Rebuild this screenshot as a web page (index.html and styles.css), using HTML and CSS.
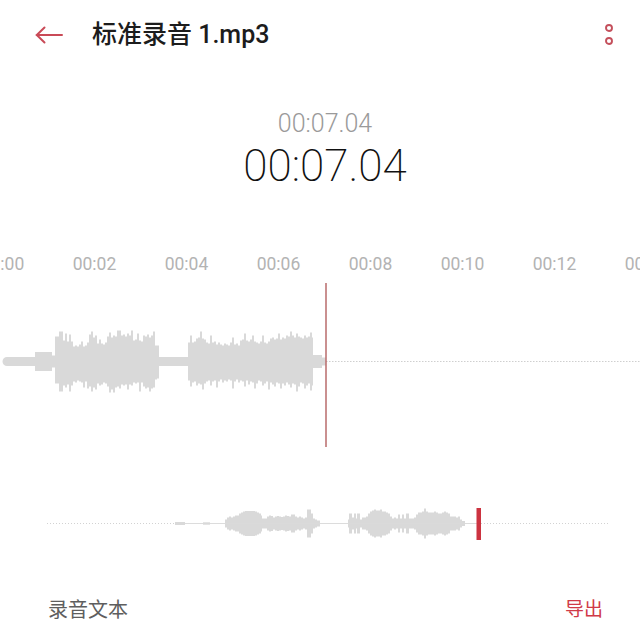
FILE: index.html
```html
<!DOCTYPE html>
<html lang="zh">
<head>
<meta charset="utf-8">
<title>标准录音 1.mp3</title>
<link rel="stylesheet" href="styles.css">
</head>
<body>
<div class="page">
  <div class="header">
    <svg class="back" viewBox="0 0 28 18"><path d="M1.5 9H27M9.5 1.5L1.8 9l7.7 7.5" fill="none" stroke="#c94a57" stroke-width="2" stroke-linecap="round" stroke-linejoin="round"/></svg>
    <div class="title">标准录音 1.mp3</div>
    <svg class="more" viewBox="0 0 12 30"><circle cx="6" cy="8" r="3" fill="none" stroke="#c4505c" stroke-width="1.9"/><circle cx="6" cy="21" r="3" fill="none" stroke="#c4505c" stroke-width="1.9"/></svg>
  </div>
  <div class="times">
    <div class="time-sub">00:07.04</div>
    <div class="time-main">00:07.04</div>
  </div>
  <div class="ruler-wrap">
    <div class="ruler">
      <span>00:00</span><span>00:02</span><span>00:04</span><span>00:06</span><span>00:08</span><span>00:10</span><span>00:12</span><span>00:14</span>
    </div>
  </div>
  <svg class="wave" viewBox="0 0 640 170">
    <g transform="translate(0,81.5)">
      <line x1="326" y1="0" x2="640" y2="0" stroke="#cfcfcf" stroke-width="1" stroke-dasharray="1.5 1.5"/>
      <path fill="#d9d9d9" d="M7,-4.5 H35 V-9.5 H52 V-6 H55 V-25 H59 V-30 H63 V-21 H65 V-28 H67 V-20 H69 V-27 H71 V-20 H73 V-15 H75 V-16 H77 V-15 H79 V-17 H81 V-20 H83 V-15 H85 V-16 H87 V-19 H89 V-27 H91 V-30 H93 V-24 H95 V-26 H97 V-18 H99 V-22 H101 V-18 H103 V-17 H105 V-19 H107 V-25 H109 V-29 H111 V-24 H113 V-26 H115 V-25 H117 V-31 H121 V-26 H123 V-27 H125 V-25 H127 V-28 H129 V-26 H131 V-31 H133 V-21 H135 V-22 H137 V-28 H139 V-21 H141 V-20 H143 V-26 H145 V-25 H147 V-27 H149 V-24 H151 V-26 H153 V-30 H155 V-16 H159 V-4.5 H188 V-19 H190 V-26 H192 V-19 H194 V-20 H196 V-23 H198 V-24 H200 V-30 H202 V-23 H204 V-22 H206 V-19 H208 V-18 H210 V-26 H212 V-19 H214 V-20 H216 V-17 H218 V-19 H220 V-17 H222 V-16 H224 V-18 H226 V-17 H228 V-16 H230 V-19 H232 V-24 H234 V-17 H236 V-18 H238 V-16 H240 V-21 H242 V-22 H244 V-28 H246 V-21 H248 V-20 H250 V-22 H252 V-26 H254 V-20 H256 V-19 H258 V-18 H260 V-20 H262 V-26 H264 V-19 H266 V-18 H268 V-20 H270 V-23 H272 V-24 H274 V-22 H276 V-23 H278 V-28 H280 V-22 H282 V-24 H284 V-23 H286 V-26 H288 V-25 H290 V-30 H292 V-26 H294 V-24 H296 V-28 H298 V-25 H300 V-24 H302 V-23 H304 V-26 H306 V-24 H308 V-25 H310 V-29 H312 V-24 H313 V-6.5 H322 V-4 H326 V4 H322 V6.5 H313 V24 H312 V29 H310 V22 H308 V24 H306 V27 H304 V22 H302 V21 H300 V25 H298 V30 H296 V23 H294 V22 H292 V26 H290 V23 H288 V21 H286 V24 H284 V22 H282 V27 H280 V22 H278 V21 H276 V25 H274 V23 H272 V21 H270 V28 H268 V20 H266 V22 H264 V24 H262 V20 H260 V19 H258 V22 H256 V27 H254 V21 H252 V20 H250 V23 H248 V19 H246 V25 H244 V20 H242 V19 H240 V21 H238 V18 H236 V20 H234 V27 H232 V19 H230 V18 H228 V20 H226 V19 H224 V21 H222 V18 H220 V20 H218 V26 H216 V19 H214 V20 H212 V24 H210 V19 H208 V20 H206 V22 H204 V28 H202 V23 H200 V22 H198 V24 H196 V20 H194 V21 H192 V25 H190 V19 H188 V4.5 H159 V17 H157 V18 H155 V26 H153 V27 H151 V30 H149 V26 H147 V27 H145 V25 H143 V21 H141 V30 H139 V21 H137 V22 H135 V21 H133 V24 H131 V23 H129 V28 H127 V23 H125 V24 H123 V23 H121 V27 H119 V25 H117 V26 H115 V31 H113 V28 H111 V31 H109 V25 H107 V22 H105 V21 H103 V23 H101 V24 H99 V22 H97 V28 H95 V26 H93 V30 H91 V25 H89 V27 H87 V20 H85 V26 H83 V21 H81 V20 H79 V19 H77 V21 H75 V20 H73 V24 H71 V30 H69 V23 H67 V26 H65 V24 H63 V30 H59 V22 H55 V6 H52 V9.5 H35 V4.5 H7 A4.5 4.5 0 0 1 7 -4.5 Z"/>
      <line x1="326" y1="-78.5" x2="326" y2="85.5" stroke="#b96b6b" stroke-width="1.5"/>
    </g>
  </svg>
  <svg class="mini" viewBox="0 0 640 50">
    <defs>
      <path id="blob1" d="M225,0 V-4 H227 V-6 H229 V-7 H231 V-6 H233 V-7 H235 V-8 H239 V-10 H241 V-11 H243 V-12 H245 V-12.5 H255 V-12 H257 V-11 H259 V-10 H261 V-8 H262 V-5 H267 V-7 H269 V-8 H271 V-7.5 H273 V-6 H275 V-7 H277 V-7.5 H279 V-7 H281 V-6.5 H283 V-7 H285 V-8 H287 V-7.5 H289 V-7 H291 V-9 H295 V-7 H297 V-6 H299 V-7 H301 V-6 H303 V-5 H305 V-6 H307 V-14 H311 V-10 H313 V-5 H315 V-4 H317 V-3 H320 V0 Z"/>
      <path id="blob2" d="M348,0 V-4 H349 V-10 H352 V-6 H354 V-10 H356 V-5 H357 V-10 H360 V-4 H362 V-6 H366 V-7 H368 V-10 H370 V-12 H372 V-13 H374 V-14 H376 V-13 H380 V-14 H382 V-12 H386 V-11 H388 V-10 H390 V-7 H392 V-5 H394 V-6 H396 V-5 H398 V-9 H400 V-5 H402 V-9 H404 V-5 H406 V-10 H409 V-5 H414 V-6 H416 V-9 H418 V-11 H422 V-12 H424 V-15 H426 V-12 H428 V-11 H434 V-12 H436 V-11 H438 V-10 H442 V-11 H444 V-12 H446 V-11 H448 V-10 H450 V-7 H456 V-6 H458 V-7 H460 V-4 H462 V-2.5 H465 V0 Z"/>
    </defs>
    <g transform="translate(0,23.5)">
      <line x1="47" y1="0" x2="175" y2="0" stroke="#d2d2d2" stroke-width="1" stroke-dasharray="1 2"/>
      <line x1="481" y1="0" x2="608" y2="0" stroke="#d2d2d2" stroke-width="1" stroke-dasharray="1 2"/>
      <line x1="175" y1="0" x2="477" y2="0" stroke="#dcdcdc" stroke-width="1.2"/>
      <rect x="175" y="-1.5" width="10" height="3" fill="#d9d9d9"/>
      <rect x="203" y="-1.2" width="7" height="2.4" fill="#d9d9d9"/>
      <g fill="#d9d9d9">
        <use href="#blob1"/>
        <use href="#blob1" transform="scale(1,-1)"/>
        <use href="#blob2"/>
        <use href="#blob2" transform="scale(1,-1)"/>
      </g>
      <rect x="476.5" y="-15.5" width="4.5" height="32" fill="#cc3340"/>
    </g>
  </svg>
  <div class="footer">
    <span class="label">录音文本</span>
    <span class="export">导出</span>
  </div>
</div>
</body>
</html>
```
FILE: styles.css
```css
html, body {
  margin: 0;
  padding: 0;
  background: #ffffff;
}
body {
  font-family: Roboto, "Noto Sans CJK SC", sans-serif;
}
.page {
  width: 640px;
  height: 627px;
  overflow: hidden;
}
.header {
  display: flex;
  align-items: center;
  height: 70px;
  padding: 0 25px 0 35px;
}
.back {
  display: block;
  width: 28px;
  height: 18px;
}
.title {
  margin-left: 29px;
  font-size: 25px;
  font-weight: 500;
  line-height: 30px;
  color: #1c1c1c;
}
.more {
  display: block;
  margin-left: auto;
  width: 12px;
  height: 30px;
}
.times {
  margin-top: 39px;
  padding-left: 10px;
  text-align: center;
}
.time-sub {
  font-size: 25px;
  line-height: 30px;
  font-weight: 300;
  color: #9a9a9a;
}
.time-main {
  margin-top: 2px;
  font-size: 44px;
  line-height: 50px;
  font-weight: 200;
  color: #111111;
}
.ruler-wrap {
  margin-top: 63px;
  height: 20px;
  overflow: hidden;
}
.ruler {
  display: flex;
  margin-left: -43.5px;
  height: 20px;
  line-height: 20px;
}
.ruler span {
  flex: 0 0 92px;
  text-align: center;
  font-size: 17.5px;
  color: #b3b3b3;
}
.wave {
  display: block;
  margin-top: 6px;
  width: 640px;
  height: 170px;
}
.mini {
  display: block;
  margin-top: 50px;
  width: 640px;
  height: 50px;
}
.footer {
  display: flex;
  justify-content: space-between;
  align-items: center;
  margin-top: 48px;
  padding: 0 37px 0 48px;
  line-height: 24px;
}
.label {
  font-size: 20px;
  color: #5e5e5e;
}
.export {
  font-size: 19px;
  color: #d03a48;
}
```
